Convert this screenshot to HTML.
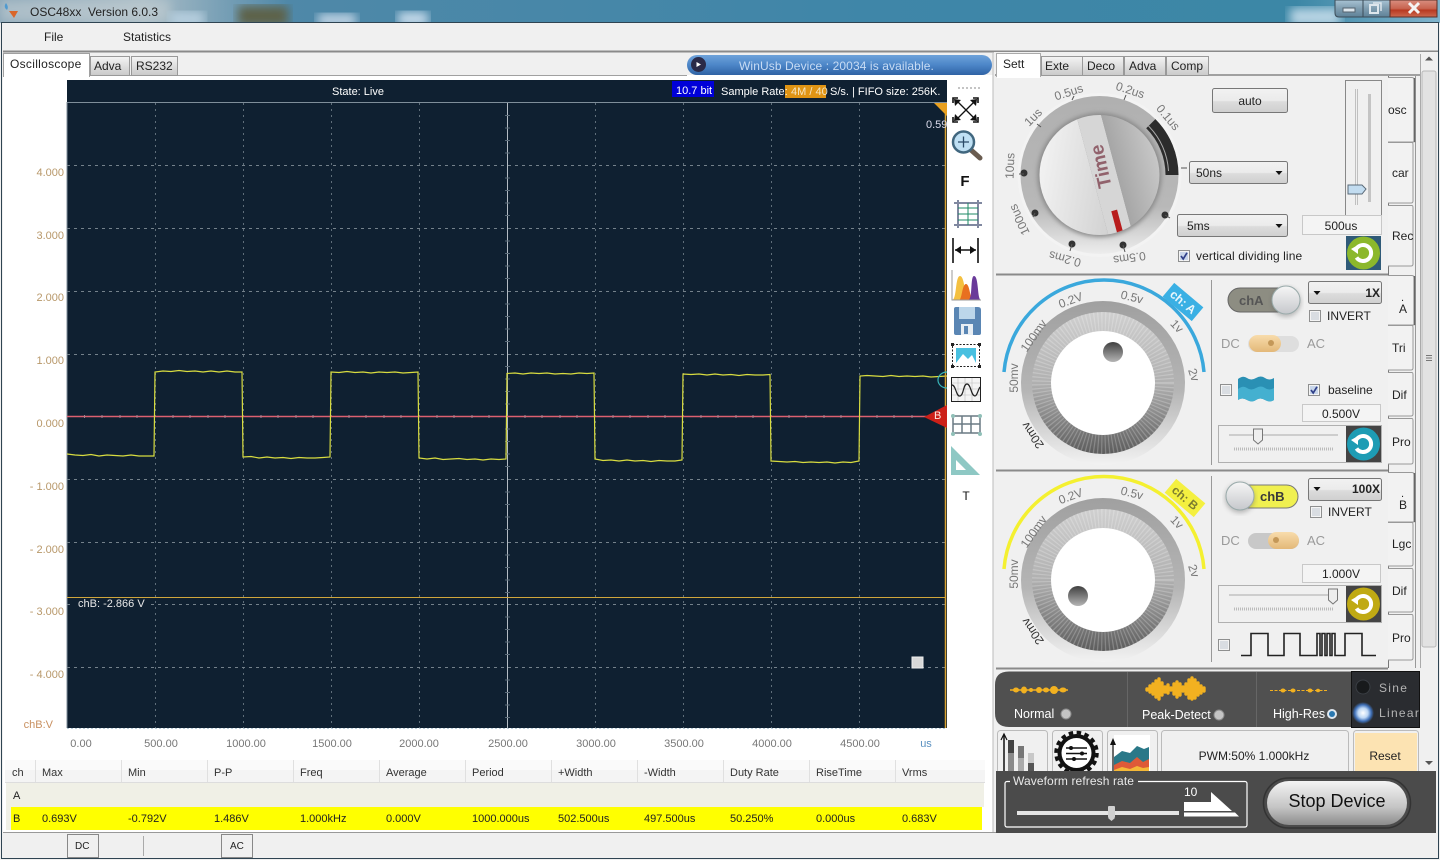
<!DOCTYPE html>
<html><head><meta charset="utf-8"><title>OSC48xx</title>
<style>
html,body{margin:0;padding:0;width:1440px;height:860px;overflow:hidden;background:#f0f0f0}
svg{display:block}
text{font-family:"Liberation Sans",sans-serif;font-size:12px;fill:#222}
.t11{font-size:11px}
.y{font-size:11px;fill:#b8986a;text-anchor:end}
.x{font-size:11px;fill:#777;text-anchor:middle}
.h{font-size:11px;fill:#333}
.v{font-size:11px;fill:#222}
.k{font-size:12px;fill:#777;text-anchor:middle}
.w{fill:#fff}
</style></head><body>
<svg width="1440" height="860" viewBox="0 0 1440 860" xmlns="http://www.w3.org/2000/svg">
<defs>
<linearGradient id="tb" x1="0" x2="1" y1="0" y2="0"><stop offset="0" stop-color="#8aa6b8"/><stop offset=".1" stop-color="#a9bcc6"/><stop offset=".2" stop-color="#4f88a8"/><stop offset=".6" stop-color="#3f86a8"/><stop offset=".9" stop-color="#3c87a6"/><stop offset="1" stop-color="#7fb3cc"/></linearGradient>
<linearGradient id="btn" x1="0" x2="0" y1="0" y2="1"><stop offset="0" stop-color="#f2f2f2"/><stop offset=".5" stop-color="#ebebeb"/><stop offset=".55" stop-color="#dcdcdc"/><stop offset="1" stop-color="#cfcfcf"/></linearGradient>
<linearGradient id="tab" x1="0" x2="0" y1="0" y2="1"><stop offset="0" stop-color="#f4f4f4"/><stop offset="1" stop-color="#c9c9c9"/></linearGradient>
<linearGradient id="pill" x1="0" x2="0" y1="0" y2="1"><stop offset="0" stop-color="#6ea2da"/><stop offset=".5" stop-color="#4c86c8"/><stop offset="1" stop-color="#2f62a4"/></linearGradient>
<linearGradient id="ko" x1="0" x2="0" y1="0" y2="1"><stop offset="0" stop-color="#a0a0a0"/><stop offset=".55" stop-color="#b5b5b5"/><stop offset="1" stop-color="#f2f2f2"/></linearGradient>
<linearGradient id="kr" x1="0" x2="0" y1="0" y2="1"><stop offset="0" stop-color="#d0d0d0"/><stop offset=".5" stop-color="#b0b0b0"/><stop offset="1" stop-color="#5c5c5c"/></linearGradient>
<linearGradient id="dot1" x1="0" x2="0" y1="0" y2="1"><stop offset="0" stop-color="#3f3f3f"/><stop offset="1" stop-color="#b5b5b5"/></linearGradient>
<linearGradient id="to" x1="0" x2="0" y1="0" y2="1"><stop offset="0" stop-color="#b0b0b0"/><stop offset=".7" stop-color="#b8b8b8"/><stop offset="1" stop-color="#ededed"/></linearGradient>
<linearGradient id="tl" x1="0" x2="1" y1="0" y2="1"><stop offset="0" stop-color="#fff"/><stop offset="1" stop-color="#d0d0d0"/></linearGradient>
<linearGradient id="tr" x1="0" x2="1" y1="0" y2="0"><stop offset="0" stop-color="#a6a6a6"/><stop offset="1" stop-color="#d4d4d4"/></linearGradient>
<linearGradient id="tog" x1="0" x2="0" y1="0" y2="1"><stop offset="0" stop-color="#f6f6f6"/><stop offset="1" stop-color="#c6c8cc"/></linearGradient>
<linearGradient id="org" x1="0" x2="0" y1="0" y2="1"><stop offset="0" stop-color="#f8dcac"/><stop offset="1" stop-color="#e3b878"/></linearGradient>
<linearGradient id="stop" x1="0" x2="0" y1="0" y2="1"><stop offset="0" stop-color="#f4f4f4"/><stop offset=".6" stop-color="#c4c4c4"/><stop offset="1" stop-color="#8c8c8c"/></linearGradient>
<radialGradient id="glow"><stop offset="0" stop-color="#fff"/><stop offset=".45" stop-color="#bcd6f4"/><stop offset=".75" stop-color="#3f70b8"/><stop offset="1" stop-color="#2a2c30"/></radialGradient>
<linearGradient id="cls" x1="0" x2="0" y1="0" y2="1"><stop offset="0" stop-color="#d98f80"/><stop offset=".5" stop-color="#c86450"/><stop offset=".6" stop-color="#b83a22"/><stop offset="1" stop-color="#cc6a50"/></linearGradient>
<linearGradient id="wb" x1="0" x2="0" y1="0" y2="1"><stop offset="0" stop-color="#a9c4d4"/><stop offset=".5" stop-color="#7f9db0"/><stop offset="1" stop-color="#5f8298"/></linearGradient>
<clipPath id="dial"><circle cx="0" cy="0" r="60"/></clipPath>
<clipPath id="plot"><rect x="67" y="80" width="880" height="648"/></clipPath>
<filter id="bl"><feGaussianBlur stdDeviation="5"/></filter>
<filter id="sh"><feGaussianBlur stdDeviation="2.5"/></filter>
<g id="knob">
<circle r="82" fill="url(#ko)"/>
<circle r="71" fill="url(#kr)"/>
<circle r="61.5" fill="none" stroke="#fff" stroke-opacity=".22" stroke-width="19" stroke-dasharray="1.2 2.4"/>
<circle r="52" fill="#fff"/>
</g>
<g id="cb"><rect x=".5" y=".5" width="11" height="11" fill="#f4f4f4" stroke="#8e8f8f"/><rect x="2" y="2" width="8" height="8" fill="#d9dde2"/></g>
<g id="cbc"><rect x=".5" y=".5" width="11" height="11" fill="#f4f4f4" stroke="#8e8f8f"/><rect x="2" y="2" width="8" height="8" fill="#c8d6ea"/><path d="M3 6 L5.2 9 L9 2.8" fill="none" stroke="#2f3f88" stroke-width="1.7"/></g>
<g id="ar"><path d="M-3.5 -2 H3.5 L0 2 Z" fill="#111"/></g>
<g id="rf"><path d="M10.5 12.5 A8 8 0 1 1 10.5 21.5" fill="none" stroke="#fff" stroke-width="4"/><path d="M5 13 L12 9 L12 18Z" fill="#fff"/></g>
<g id="thumb"><path d="M-4.5 -7 H4.5 V4 L0 8 L-4.5 4 Z" fill="#eee" stroke="#777"/></g>
</defs>

<!-- title bar -->
<rect width="1440" height="23" fill="url(#tb)"/>
<rect x="0" y="0" width="170" height="22" fill="#c6d0d4" opacity=".55" filter="url(#bl)"/>
<rect x="238" y="6" width="50" height="20" fill="#5d6248" filter="url(#bl)"/>
<rect x="170" y="12" width="34" height="14" fill="#b8d0e0" filter="url(#bl)"/>
<rect x="318" y="14" width="38" height="12" fill="#c6d8e8" filter="url(#bl)"/>
<rect x="398" y="12" width="30" height="14" fill="#c8dcec" filter="url(#bl)"/>
<rect x="1290" y="8" width="50" height="18" fill="#b8d4e4" filter="url(#bl)"/>
<path d="M9 11 L18 11 L14 18 Z" fill="#d9662a"/><path d="M7 10 Q3 7 6 3 Q9 7 7 10Z" fill="#4f9ad0"/>
<text x="30" y="16" style="font-size:12px" fill="#222">OSC48xx&#160;&#160;Version 6.0.3</text>
<path d="M1335 0 V13 Q1335 17 1339 17 H1390 V0Z" fill="url(#wb)" stroke="#3c4c58"/>
<rect x="1390" y="0" width="47" height="17" fill="url(#cls)" stroke="#5c3028"/>
<line x1="1363" y1="0" x2="1363" y2="17" stroke="#3c4c58"/>
<rect x="1343" y="8" width="12" height="4" fill="#dde6ec" stroke="#54636e"/>
<rect x="1370" y="5" width="8" height="8" fill="none" stroke="#dde6ec" stroke-width="2"/><path d="M1373 3 H1381 V11" fill="none" stroke="#dde6ec" stroke-width="1.5"/>
<path d="M1409 3 L1419 13 M1419 3 L1409 13" stroke="#f4f4f4" stroke-width="3"/>

<!-- window frame -->
<rect x="1.5" y="22.5" width="1437" height="836" fill="#f0f0f0" stroke="#2f4452"/>
<text x="44" y="41">File</text>
<text x="123" y="41">Statistics</text>
<line x1="3" y1="51.5" x2="1438" y2="51.5" stroke="#8a8a8a" stroke-width="2"/>

<!-- left pane -->
<rect x="3" y="75" width="990" height="757" fill="#fff"/>
<line x1="89" y1="75.5" x2="687" y2="75.5" stroke="#a0a0a0"/>
<rect x="3.5" y="53.5" width="86" height="23" fill="#fff" stroke="#a0a0a0"/><rect x="4" y="70" width="85" height="8" fill="#fff"/>
<text x="10" y="68" style="letter-spacing:.3px">Oscilloscope</text>
<rect x="90.5" y="56.5" width="39" height="19" fill="url(#tab)" stroke="#999"/><text x="94" y="70">Adva</text>
<rect x="131.5" y="56.5" width="46" height="19" fill="url(#tab)" stroke="#999"/><text x="136" y="70">RS232</text>
<line x1="993" y1="52" x2="993" y2="832" stroke="#bbb"/>
<rect x="994" y="52" width="426" height="780" fill="#f0f0f0"/>

<rect x="687" y="55" width="305" height="20" rx="10" fill="url(#pill)"/>
<circle cx="698.5" cy="64.5" r="7.5" fill="#2a2a48"/><path d="M696.5 62 L701 64.5 L696.5 67Z" fill="#fff"/>
<text x="739" y="70" style="fill:#c8dcf4;letter-spacing:.1px">WinUsb Device : 20034 is available.</text>

<!-- plot -->
<rect x="67" y="80" width="880" height="648" fill="#0f2031"/>
<line x1="67" y1="102.5" x2="947" y2="102.5" stroke="#7f8e9a"/>
<line x1="67" y1="102" x2="67" y2="728" stroke="#7f8e9a"/>
<g stroke="#5f6e7a" stroke-width="1" stroke-dasharray="2 4">
<path d="M155.5 103V728M243.5 103V728M331.5 103V728M419.5 103V728M595.5 103V728M683.5 103V728M771.5 103V728M859.5 103V728"/>
</g>
<g stroke="#74818b" stroke-width="1" stroke-dasharray="3 4">
<path d="M67 165.5H945M67 228.5H945M67 291.5H945M67 354.5H945M67 479.5H945M67 542.5H945M67 604.5H945M67 667.5H945"/>
</g>
<line x1="507.5" y1="103" x2="507.5" y2="728" stroke="#b4bcc4"/>
<path d="M505 115.5h5M505 128h5M505 140.5h5M505 153h5M505 178h5M505 190.5h5M505 203h5M505 215.5h5M505 241h5M505 253.5h5M505 266h5M505 278.5h5M505 304h5M505 316.5h5M505 329h5M505 341.5h5M505 366.5h5M505 379h5M505 391.5h5M505 404h5M505 429h5M505 441.5h5M505 454h5M505 466.5h5M505 492h5M505 504.5h5M505 517h5M505 529.5h5M505 555h5M505 567.5h5M505 580h5M505 592.5h5M505 617h5M505 629.5h5M505 642h5M505 654.5h5M505 680h5M505 692.5h5M505 705h5M505 717.5h5" stroke="#5a6a78"/>
<line x1="67" y1="416.5" x2="928" y2="416.5" stroke="#dc6070" stroke-width="1.5"/>
<path d="M84.500 415v3M102 415v3M120 415v3M137 415v3M173 415v3M190 415v3M208 415v3M225 415v3M261 415v3M278 415v3M296 415v3M313 415v3M349 415v3M366 415v3M384 415v3M401 415v3M437 415v3M454 415v3M472 415v3M489 415v3M525 415v3M542 415v3M560 415v3M577 415v3M613 415v3M630 415v3M648 415v3M665 415v3M701 415v3M718 415v3M736 415v3M753 415v3M789 415v3M806 415v3M824 415v3M841 415v3M877 415v3M894 415v3M912 415v3" stroke="#a08490"/>
<line x1="67" y1="597.5" x2="945" y2="597.5" stroke="#d0a63c"/>
<rect x="70" y="598" width="80" height="12" fill="#0f2031"/>
<g clip-path="url(#plot)">
<polyline fill="none" stroke="#d8dc40" stroke-width="1.2" points="67,454 75,455 83,455.500 91,454.500 99,456 107,455 115,455.500 123,456 131,455 139,456 147,456 154,456 155,372 163,371 171,371.500 179,370.500 187,371.500 195,371 203,372 211,371 219,372 227,371 235,372 242,372 243,457 251,456.500 259,458 267,457 275,458 283,457.500 291,458.500 299,457.500 307,458 315,458 323,457.500 330,457 331,372 339,372.500 347,371.500 355,372.500 363,372 371,373 379,372 387,372.500 395,372 403,373 411,372.500 418,372 419,458 427,459 435,458 443,459.500 451,459 459,458.500 467,459.500 475,459 483,460 491,459 499,459.500 506,459 507,373.500 515,373 523,374 531,373 539,373.500 547,373 555,374 563,373.500 571,374 579,373 587,373.500 594,373 595,459 603,460.500 611,460 619,461 627,460 635,461 643,460.500 651,461.500 659,460.500 667,461 675,461 682,460 683,374 691,374.500 699,374 707,375 715,374 723,375 731,374.500 739,375.500 747,374.500 755,375 763,375 770,374.500 771,461 779,461.500 787,462 795,461.500 803,462.500 811,462 819,462.500 827,462 835,463 843,462 851,462.500 859,461 860,376 867,375.500 875,376 883,376.500 891,375.500 899,376.500 907,376 915,376.500 923,376 931,377 939,376.500 947,376"/>
</g>
<text x="332" y="95" class="t11 w">State: Live</text>
<rect x="672" y="81" width="42" height="16" fill="#0000d8"/>
<text x="676" y="94" class="t11 w">10.7 bit</text>
<rect x="785" y="85" width="41" height="13" fill="#e09414"/>
<text x="721" y="95" class="t11 w">Sample Rate:</text>
<text x="791" y="95" class="t11" style="fill:#f4e4c0">4M / 40</text>
<text x="830" y="95" class="t11 w">S/s. | FIFO size: 256K.</text>
<text x="78" y="607" class="t11" style="fill:#e8e8e8">chB: -2.866 V</text>
<rect x="912" y="657" width="11" height="11" fill="#d8d8d8" stroke="#eee"/>
<line x1="945.500" y1="103" x2="945.500" y2="728" stroke="#d8a030" stroke-width="1.5"/>
<path d="M934 103 H947 V116 Z" fill="#e8a020"/>
<svg x="67" y="80" width="880" height="648" viewBox="67 80 880 648"><text x="926" y="128" class="t11" style="fill:#dde">0.59</text></svg>
<path d="M947 405 V428 L924 417 Z" fill="#cc2018"/>
<text x="934" y="419" class="t11" style="fill:#ffe8e0">B</text>
<path d="M947 372 A9 8 0 0 0 947 388" fill="none" stroke="#38b4b8" stroke-width="1.2"/>
<line x1="67" y1="728.500" x2="947" y2="728.500" stroke="#b8ccd8" stroke-dasharray="2 2"/>

<text class="y" x="64" y="176">4.000</text><text class="y" x="64" y="239">3.000</text><text class="y" x="64" y="301">2.000</text><text class="y" x="64" y="364">1.000</text><text class="y" x="64" y="427">0.000</text><text class="y" x="64" y="490">- 1.000</text><text class="y" x="64" y="553">- 2.000</text><text class="y" x="64" y="615">- 3.000</text><text class="y" x="64" y="678">- 4.000</text>
<text class="y" x="53" y="728" style="fill:#c89060">chB:V</text>
<text class="x" x="81" y="747">0.00</text><text class="x" x="161" y="747">500.00</text><text class="x" x="246" y="747">1000.00</text><text class="x" x="332" y="747">1500.00</text><text class="x" x="419" y="747">2000.00</text><text class="x" x="508" y="747">2500.00</text><text class="x" x="596" y="747">3000.00</text><text class="x" x="684" y="747">3500.00</text><text class="x" x="772" y="747">4000.00</text><text class="x" x="860" y="747">4500.00</text>
<text class="x" x="926" y="747" style="fill:#5a90c0">us</text>

<!-- toolbar -->
<line x1="958" y1="88" x2="980" y2="88" stroke="#888" stroke-dasharray="2 2"/>
<g stroke="#111" fill="none" stroke-width="1.6"><path d="M953 103V98H958M973 98H978V103M953 117V122H958M973 122H978V117"/><path d="M956 100L976 120M976 100L956 120" stroke-width="1.3"/></g>
<g fill="#111"><path d="M954 99L961 100L955 106ZM977 99L970 100L976 106ZM954 121L961 120L955 114ZM977 121L970 120L976 114Z"/></g>
<path d="M971 150L980 158" stroke="#6a5c50" stroke-width="5" stroke-linecap="round"/>
<circle cx="963.500" cy="142" r="10.500" fill="#bfe0f4" stroke="#41677f" stroke-width="2.500"/><path d="M958 142h11M963.500 136.500v11" stroke="#2a4a68" stroke-width="1.3"/>
<text x="965" y="186" text-anchor="middle" style="font-size:15px;font-weight:bold;fill:#111">F</text>
<g stroke="#8088a0" stroke-width="2"><path d="M954 203H982M954 225H982M958 200V228M978 200V228"/></g>
<path d="M958 214H978M968 203V225M958 208H978M958 220H978" stroke="#1c8a64" stroke-width="1"/>
<path d="M953 238V263M978 238V263" stroke="#111" stroke-width="1.6"/><path d="M955 250H976" stroke="#111" stroke-width="1.5"/><path d="M955 250L961 246V254ZM976 250L970 246V254Z" fill="#111"/>
<path d="M952 300C957 300 955 276 960 276C965 276 965 300 968 300Z" fill="#f4c040"/><path d="M959 300C962 300 962 284 966 284C970 284 970 300 973 300Z" fill="#e87020"/><path d="M968 300C973 300 970 276 974 276C979 276 977 300 981 300Z" fill="#6a3a9a"/><path d="M952 270V300H981" fill="none" stroke="#999"/>
<path d="M954 309Q954 307 956 307H978Q981 307 981 310V333Q981 335 979 335H956Q954 335 954 333Z" fill="#5a86b4"/><rect x="959" y="307" width="16" height="12" fill="#bcd6ea"/><rect x="961" y="324" width="12" height="11" fill="#e8eef4"/><rect x="964" y="326" width="4" height="8" fill="#5a86b4"/>
<rect x="952.500" y="344.500" width="27" height="22" fill="#fff" stroke="#222" stroke-dasharray="2 1.500"/><rect x="956" y="348" width="20" height="15" fill="#48c0e0"/><path d="M956 363L963 354L968 359L972 355L976 363Z" fill="#fff"/><rect x="951" y="343" width="3" height="3" fill="#222"/><rect x="978" y="343" width="3" height="3" fill="#222"/><rect x="951" y="365" width="3" height="3" fill="#222"/><rect x="978" y="365" width="3" height="3" fill="#222"/>
<rect x="951.500" y="377.500" width="29" height="24" fill="#f4f4f4" stroke="#222"/><path d="M952 383H980M952 389H980M952 395H980M958 378V401M965 378V401M972 378V401" stroke="#bbb" stroke-width=".6"/><path d="M952 385C956 385 956 397 960 396C964 395 963 384 967 384C971 384 971 396 975 396C977 396 978 390 980 387" fill="none" stroke="#222" stroke-width="1.2"/>
<g stroke="#6a7a84" stroke-width="1.500"><path d="M953 416H980M953 424H980M953 433H980M953 416V433M962 416V433M971 416V433M980 416V433"/></g><g fill="#90c0b8"><circle cx="953" cy="416" r="2"/><circle cx="980" cy="416" r="2"/><circle cx="953" cy="434" r="2"/><circle cx="980" cy="434" r="2"/></g>
<path d="M951 446V475H980ZM956 460L956 470H966Z" fill="#8ec8c4" fill-rule="evenodd"/>
<text x="966" y="500" text-anchor="middle" style="font-size:12px;fill:#111">T</text>

<!-- table -->
<rect x="5" y="760" width="980" height="23" fill="#fafafa"/>
<rect x="5" y="770" width="980" height="13" fill="#f4f4f4"/>
<line x1="5" y1="782.500" x2="985" y2="782.500" stroke="#ddd"/>
<path d="M35.500 760V782M121.500 760V782M207.500 760V782M293.500 760V782M379.500 760V782M465.500 760V782M551.500 760V782M637.500 760V782M723.500 760V782M809.500 760V782M895.500 760V782" stroke="#e0e0e0"/>
<text class="h" x="12" y="776">ch</text><text class="h" x="42" y="776">Max</text><text class="h" x="128" y="776">Min</text><text class="h" x="214" y="776">P-P</text><text class="h" x="300" y="776">Freq</text><text class="h" x="386" y="776">Average</text><text class="h" x="472" y="776">Period</text><text class="h" x="558" y="776">+Width</text><text class="h" x="644" y="776">-Width</text><text class="h" x="730" y="776">Duty Rate</text><text class="h" x="816" y="776">RiseTime</text><text class="h" x="902" y="776">Vrms</text>
<rect x="6" y="783" width="978" height="24" fill="#f0f0e6"/>
<rect x="11" y="807" width="971" height="23" fill="#ffff00"/>
<rect x="6" y="807" width="5" height="23" fill="#f0f0e6"/>
<text class="v" x="13" y="799">A</text>
<text class="v" x="13" y="822">B</text><text class="v" x="42" y="822">0.693V</text><text class="v" x="128" y="822">-0.792V</text><text class="v" x="214" y="822">1.486V</text><text class="v" x="300" y="822">1.000kHz</text><text class="v" x="386" y="822">0.000V</text><text class="v" x="472" y="822">1000.000us</text><text class="v" x="558" y="822">502.500us</text><text class="v" x="644" y="822">497.500us</text><text class="v" x="730" y="822">50.250%</text><text class="v" x="816" y="822">0.000us</text><text class="v" x="902" y="822">0.683V</text>

<!-- bottom bar -->
<rect x="3" y="832" width="1435" height="26" fill="#f0f0f0"/>
<line x1="3" y1="832.500" x2="996" y2="832.500" stroke="#999"/>
<rect x="67.500" y="834.500" width="31" height="23" fill="#f0f0f0" stroke="#888"/><text x="75" y="849" style="font-size:10px">DC</text>
<line x1="143.500" y1="836" x2="143.500" y2="856" stroke="#aaa"/>
<rect x="221.500" y="834.500" width="31" height="23" fill="#f0f0f0" stroke="#888"/><text x="230" y="849" style="font-size:10px">AC</text>

<!-- right tabs -->
<rect x="995" y="74" width="425" height="2" fill="#a0a0a0"/>
<rect x="996.500" y="53.500" width="44" height="23" fill="#fff" stroke="#aaa"/><rect x="997" y="70" width="43" height="8" fill="#fff"/>
<text x="1003" y="68">Sett</text>
<rect x="1041.500" y="56.500" width="41" height="19" fill="url(#tab)" stroke="#999"/><text x="1045" y="70">Exte</text>
<rect x="1082.500" y="56.500" width="41" height="19" fill="url(#tab)" stroke="#999"/><text x="1087" y="70">Deco</text>
<rect x="1124.500" y="56.500" width="41" height="19" fill="url(#tab)" stroke="#999"/><text x="1129" y="70">Adva</text>
<rect x="1166.500" y="56.500" width="42" height="19" fill="url(#tab)" stroke="#999"/><text x="1171" y="70">Comp</text>

<!-- panel separators -->
<path d="M996 274.500H1388M996 470.500H1388M996 668.500H1388" stroke="#8a8a8a" stroke-width="2"/>
<line x1="1388.500" y1="76" x2="1388.500" y2="668" stroke="#777"/>
<line x1="1415.500" y1="76" x2="1415.500" y2="668" stroke="#999"/>

<!-- vertical tabs -->
<g fill="#f2f2f2" stroke="#999">
<path d="M1388 77.500H1412Q1414 77.500 1414 80V142H1388"/><path d="M1388 142.500H1412Q1413 142.500 1413 145V201Q1413 203 1411 203H1388"/><path d="M1388 205.500H1412Q1413 205.500 1413 208V264Q1413 266 1411 266H1388"/>
<path d="M1388 275.500H1412Q1414 275.500 1414 278V325H1388"/><path d="M1388 325.500H1412Q1413 325.500 1413 328V368Q1413 370 1411 370H1388"/><path d="M1388 372.500H1412Q1413 372.500 1413 375V414Q1413 416 1411 416H1388"/><path d="M1388 418.500H1412Q1413 418.500 1413 421V462Q1413 464 1411 464H1388"/>
<path d="M1388 472.500H1412Q1414 472.500 1414 475V522H1388"/><path d="M1388 522.500H1412Q1413 522.500 1413 525V564Q1413 566 1411 566H1388"/><path d="M1388 568.500H1412Q1413 568.500 1413 571V610Q1413 612 1411 612H1388"/><path d="M1388 614.500H1412Q1413 614.500 1413 617V658Q1413 660 1411 660H1388"/>
</g>
<line x1="1414.500" y1="78" x2="1414.500" y2="142" stroke="#666" stroke-width="1.500"/>
<line x1="1414.500" y1="276" x2="1414.500" y2="325" stroke="#666" stroke-width="1.500"/>
<line x1="1414.500" y1="473" x2="1414.500" y2="522" stroke="#666" stroke-width="1.500"/>
<svg x="1388" y="77" width="25" height="590" viewBox="1388 77 25 590">
<text x="1388" y="114">osc</text><text x="1392" y="177">car</text><text x="1392" y="240">Rec</text>
<text x="1399" y="313">A</text><text x="1392" y="352">Tri</text><text x="1392" y="399">Dif</text><text x="1392" y="446">Pro</text>
<text x="1399" y="509">B</text><text x="1392" y="548">Lgc</text><text x="1392" y="595">Dif</text><text x="1392" y="642">Pro</text>
</svg>
<text x="1401" y="301" class="t11">.</text><text x="1401" y="497" class="t11">.</text>

<!-- scrollbar -->
<rect x="1420" y="52" width="18" height="718" fill="#f0f0f0"/>
<line x1="1420.500" y1="54" x2="1420.500" y2="668" stroke="#aaa"/>
<rect x="1422" y="71" width="14" height="576" rx="2" fill="#e2e2e2" stroke="#b8b8b8"/>
<path d="M1425 60.500H1433L1429 56.500Z" fill="#555"/>
<path d="M1425 761H1433L1429 765Z" fill="#555"/>
<path d="M1426 355.500h6M1426 358h6M1426 360.500h6" stroke="#777"/>

<!-- Time knob -->
<g transform="translate(1099.500 175)">
<circle r="82" fill="#f4f4f4" opacity=".8"/>
<circle r="79" fill="url(#to)"/>
<path d="M51.300 -51.300 A72.500 72.500 0 0 1 72.500 0" fill="none" stroke="#2c2c2c" stroke-width="13"/>
<path d="M49 -49 A69 69 0 0 1 69 -4" fill="none" stroke="#aaa" stroke-width="1"/>
<circle r="62" fill="#888" filter="url(#sh)"/>
<g clip-path="url(#dial)"><g transform="rotate(-15)">
<rect x="-70" y="-70" width="63" height="140" fill="url(#tl)"/>
<rect x="-7" y="-70" width="24" height="140" fill="#d6d6d6"/>
<rect x="17" y="-70" width="60" height="140" fill="url(#tr)"/>
<rect x="2" y="38" width="6" height="24" fill="#b81c1c"/>
</g></g>
</g>
<text transform="translate(1107 165) rotate(-102)" text-anchor="middle" style="font-size:19px;font-weight:bold;fill:#91626c">Time</text>
<g fill="#333"><circle cx="1024" cy="173" r="3.500"/><circle cx="1035" cy="213" r="3.500"/><circle cx="1072" cy="244" r="3.500"/><circle cx="1123" cy="245" r="3.500"/><circle cx="1165" cy="215" r="3.500"/></g>
<path d="M1019 174h5M1033 217l2 -4M1070 251l2 -7M1125 252l-2 -7M1170 218l-5 -3M1037 124l4 3M1072 100l2 -4M1124 100l2 -5M1181 168h6" stroke="#555"/>
<text class="k" transform="translate(1014 166) rotate(-88)">10us</text>
<text class="k" transform="translate(1023 218) rotate(-115)">100us</text>
<text class="k" transform="translate(1066 255) rotate(-165)">0.2ms</text>
<text class="k" transform="translate(1129 254) rotate(172)">0.5ms</text>
<text class="k" transform="translate(1036 120) rotate(-45)">1us</text>
<text class="k" transform="translate(1070 96) rotate(-18)">0.5us</text>
<text class="k" transform="translate(1129 94) rotate(18)">0.2us</text>
<text class="k" transform="translate(1165 120) rotate(50)">0.1us</text>

<rect x="1212.500" y="88.500" width="75" height="24" rx="2" fill="url(#btn)" stroke="#777"/><text x="1250" y="105" text-anchor="middle">auto</text>
<rect x="1189.500" y="161.500" width="98" height="22" rx="2" fill="url(#btn)" stroke="#777"/><text x="1196" y="177">50ns</text><use href="#ar" x="1279" y="173"/>
<rect x="1177.500" y="214.500" width="110" height="22" rx="2" fill="url(#btn)" stroke="#777"/><text x="1187" y="230">5ms</text><use href="#ar" x="1279" y="226"/>
<use href="#cbc" x="1178" y="250"/><text x="1196" y="260" style="letter-spacing:.1px">vertical dividing line</text>
<rect x="1345.500" y="80.500" width="36" height="135" fill="#f0f0f0" stroke="#888"/>
<path d="M1355.500 89V205M1357.500 89V205" stroke="#c0c0c0"/><rect x="1368" y="94" width="3" height="108" fill="#c4c4c4"/>
<path d="M1348 185H1362L1366 189L1362 194H1348Z" fill="#c2dcf0" stroke="#5a6a78"/>
<rect x="1302.500" y="215.500" width="79" height="19" fill="#f4f4f4" stroke="#c8c8c8"/><text x="1341" y="230" text-anchor="middle">500us</text>
<rect x="1346" y="236" width="35" height="34" fill="#2f5a78"/><circle cx="1363.500" cy="253" r="16.500" fill="#8cb82c"/>
<use href="#rf" x="1346" y="236"/>

<!-- Ch A -->
<use href="#knob" x="1103" y="383"/>
<circle cx="1113" cy="352" r="10" fill="url(#dot1)"/>
<path d="M1004 372 A100.350 100.350 0 0 1 1204 372" fill="none" stroke="#3aa8dc" stroke-width="3.500"/>
<g transform="translate(1183 302) rotate(40)"><rect x="-19" y="-9" width="38" height="18" fill="#3ab0e4"/><text text-anchor="middle" y="4" style="fill:#e8f6fc;font-size:12px;font-weight:bold">ch: A</text></g>
<text class="k" transform="translate(1018 378) rotate(-90)">50mv</text>
<text class="k" transform="translate(1037 338) rotate(-55)">100mv</text>
<text class="k" transform="translate(1072 304) rotate(-20)">0.2V</text>
<text class="k" transform="translate(1131 301) rotate(14)">0.5v</text>
<text class="k" transform="translate(1174 329) rotate(46)">1v</text>
<text class="k" transform="translate(1190 376) rotate(72)">2v</text>
<text class="k" transform="translate(1036 433) rotate(-125)" style="fill:#333">20mv</text>
<line x1="1211.500" y1="280" x2="1211.500" y2="465" stroke="#999"/>
<rect x="1228" y="288" width="70" height="24" rx="12" fill="#8d8d82" stroke="#666"/><text x="1239" y="305" style="font-weight:bold;font-size:13px;fill:#555">chA</text>
<circle cx="1286" cy="302" r="15" fill="#666" opacity=".4" filter="url(#sh)"/><circle cx="1286" cy="300" r="14" fill="url(#tog)" stroke="#9aa"/>
<rect x="1308.500" y="281.500" width="73" height="22" rx="2" fill="url(#btn)" stroke="#777"/><use href="#ar" x="1317" y="293"/><text x="1380" y="297" text-anchor="end" style="font-weight:bold">1X</text>
<use href="#cb" x="1309" y="310"/><text x="1327" y="320">INVERT</text>
<text x="1221" y="348" style="fill:#9a9a9a;font-size:13px">DC</text><text x="1307" y="348" style="fill:#9a9a9a;font-size:13px">AC</text>
<rect x="1248" y="336" width="51" height="16" rx="8" fill="#dedede"/><rect x="1249" y="335" width="32" height="17" rx="8.500" fill="url(#org)"/><circle cx="1271" cy="343" r="3" fill="#c49858"/>
<use href="#cb" x="1220" y="384"/>
<path d="M1238 379Q1243 375 1247 378T1256 378T1265 378T1274 378V400Q1270 403 1265 400T1256 400T1247 400T1238 400Z" fill="#2a90b4"/><path d="M1238 389Q1243 385 1247 388T1256 388T1265 388T1274 388V400Q1270 403 1265 400T1256 400T1247 400T1238 400Z" fill="#44b0d0"/>
<use href="#cbc" x="1308" y="384"/><text x="1328" y="394">baseline</text>
<rect x="1302.500" y="404.500" width="78" height="17" fill="#f4f4f4" stroke="#c8c8c8"/><text x="1341" y="418" text-anchor="middle">0.500V</text>
<rect x="1218.500" y="425.500" width="163" height="37" fill="#f0f0f0" stroke="#b0b0b0"/>
<line x1="1229" y1="435" x2="1338" y2="435" stroke="#aaa"/><line x1="1234" y1="449" x2="1334" y2="449" stroke="#bbb" stroke-width="3" stroke-dasharray="1 1"/>
<use href="#thumb" x="1258" y="436"/>
<rect x="1346" y="426" width="35" height="36" fill="#444"/><circle cx="1363.500" cy="444" r="16.500" fill="#1e9cb4"/>
<use href="#rf" x="1346" y="427"/>

<!-- Ch B -->
<use href="#knob" x="1103" y="580"/>
<circle cx="1078" cy="596" r="10" fill="url(#dot1)"/>
<path d="M1004 569 A100.300 100.300 0 0 1 1204 569" fill="none" stroke="#f4f030" stroke-width="3.500"/>
<g transform="translate(1185 498) rotate(40)"><rect x="-19" y="-9" width="38" height="18" fill="#f4f040"/><text text-anchor="middle" y="4" style="fill:#7c7c30;font-size:12px;font-weight:bold">ch: B</text></g>
<text class="k" transform="translate(1018 574) rotate(-90)">50mv</text>
<text class="k" transform="translate(1037 534) rotate(-55)">100mv</text>
<text class="k" transform="translate(1072 500) rotate(-20)">0.2V</text>
<text class="k" transform="translate(1131 497) rotate(14)">0.5v</text>
<text class="k" transform="translate(1174 525) rotate(46)">1v</text>
<text class="k" transform="translate(1190 572) rotate(72)">2v</text>
<text class="k" transform="translate(1036 629) rotate(-125)" style="fill:#333">20mv</text>
<line x1="1211.500" y1="476" x2="1211.500" y2="662" stroke="#999"/>
<rect x="1228" y="485" width="70" height="23" rx="11.500" fill="#f0f050" stroke="#777"/><text x="1260" y="501" style="font-weight:bold;font-size:13px;fill:#3a3a3a">chB</text>
<circle cx="1240" cy="498" r="15" fill="#666" opacity=".4" filter="url(#sh)"/><circle cx="1240" cy="496" r="14" fill="url(#tog)" stroke="#9aa"/>
<rect x="1308.500" y="478.500" width="73" height="22" rx="2" fill="url(#btn)" stroke="#777"/><use href="#ar" x="1317" y="489"/><text x="1380" y="493" text-anchor="end" style="font-weight:bold">100X</text>
<use href="#cb" x="1310" y="506"/><text x="1328" y="516">INVERT</text>
<text x="1221" y="545" style="fill:#9a9a9a;font-size:13px">DC</text><text x="1307" y="545" style="fill:#9a9a9a;font-size:13px">AC</text>
<rect x="1248" y="533" width="51" height="16" rx="8" fill="#c8c8c8"/><rect x="1268" y="532" width="31" height="17" rx="8.500" fill="url(#org)"/><circle cx="1276" cy="540" r="3" fill="#c49858"/>
<rect x="1302.500" y="564.500" width="78" height="18" fill="#f4f4f4" stroke="#c8c8c8"/><text x="1341" y="578" text-anchor="middle">1.000V</text>
<rect x="1218.500" y="585.500" width="163" height="37" fill="#f0f0f0" stroke="#b0b0b0"/>
<line x1="1229" y1="595" x2="1333" y2="595" stroke="#aaa"/><line x1="1234" y1="609" x2="1334" y2="609" stroke="#bbb" stroke-width="3" stroke-dasharray="1 1"/>
<use href="#thumb" x="1333" y="596"/>
<rect x="1346" y="586" width="35" height="36" fill="#444"/><circle cx="1363.500" cy="604" r="16.500" fill="#c0aa14"/>
<use href="#rf" x="1346" y="587"/>
<use href="#cb" x="1218" y="639"/>
<path d="M1241 655.500H1251V633.500H1268V655.500H1284V633.500H1300V655.500H1317V633.500H1320V655.500H1322V633.500H1325V655.500H1327V633.500H1330V655.500H1332V633.500H1335V655.500H1345V633.500H1362V655.500H1376" fill="none" stroke="#222" stroke-width="1.600"/>

<!-- dark mode panel -->
<path d="M1009 671.500H1351V727H1009Q995 727 995 713V685Q995 671.500 1009 671.500Z" fill="#505050"/>
<line x1="1127.500" y1="672" x2="1127.500" y2="727" stroke="#666"/><line x1="1256.500" y1="672" x2="1256.500" y2="727" stroke="#666"/>
<rect x="1351.500" y="671.500" width="68" height="56" fill="#2a2c30" stroke="#111"/>
<path d="M1010 690H1068" stroke="#f2b120" stroke-width="1.500"/>
<g fill="#f2b120"><ellipse cx="1016" cy="690" rx="3" ry="2.500"/><ellipse cx="1024" cy="690" rx="3" ry="3.500"/><ellipse cx="1031" cy="690" rx="2" ry="2"/><ellipse cx="1039" cy="690" rx="3" ry="3"/><ellipse cx="1046" cy="690" rx="3" ry="2.500"/><ellipse cx="1054" cy="690" rx="4" ry="4"/><ellipse cx="1063" cy="690" rx="3.500" ry="2.500"/></g>
<g stroke="#f2b120" stroke-width="3.400" stroke-linecap="round"><path d="M1147 689v1M1150 686v6M1153 684v10M1156 681v16M1159 679v20M1162 683v12M1165 687v5M1168 685v8M1171 688v2M1174 684v10M1177 682v15M1180 684v11M1183 687v4M1186 684v10M1189 680v18M1192 678v21M1195 680v18M1198 683v12M1201 686v7M1204 688v3"/></g>
<path d="M1270 690.500H1328" stroke="#f2b120" stroke-width="1" stroke-dasharray="3 1.500"/>
<g fill="#f2b120"><ellipse cx="1283" cy="690.500" rx="2.500" ry="2"/><ellipse cx="1293" cy="690.500" rx="2.500" ry="2"/><ellipse cx="1310" cy="690.500" rx="2.500" ry="2"/><ellipse cx="1318" cy="690.500" rx="2" ry="1.800"/></g>
<text x="1014" y="718" class="w" style="font-size:12.500px">Normal</text>
<text x="1142" y="719" class="w" style="font-size:12.500px">Peak-Detect</text>
<text x="1273" y="718" class="w" style="font-size:12.500px">High-Res</text>
<circle cx="1066" cy="714" r="5" fill="#c4c4c4" stroke="#8a8a8a"/><circle cx="1219" cy="715" r="5" fill="#c4c4c4" stroke="#8a8a8a"/>
<circle cx="1332" cy="714" r="5" fill="#e0e8f0"/><circle cx="1332" cy="714" r="3" fill="#2a78b0"/>
<circle cx="1363" cy="687" r="7" fill="#181a1c" stroke="#3a3e44"/>
<circle cx="1363" cy="713" r="11" fill="url(#glow)"/>
<text x="1379" y="692" style="fill:#b4b4b4;letter-spacing:1.300px">Sine</text>
<text x="1379" y="717" style="fill:#b4b4b4;letter-spacing:1.300px">Linear</text>

<!-- button row -->
<g fill="#f0f0f0" stroke="#bbb">
<rect x="997.500" y="730.500" width="50" height="44" rx="3"/><rect x="1052.500" y="730.500" width="50" height="44" rx="3"/><rect x="1107.500" y="730.500" width="50" height="44" rx="3"/><rect x="1161.500" y="730.500" width="187" height="44" rx="3"/><rect x="1353.500" y="730.500" width="65" height="44" rx="3" />
</g>
<rect x="1355" y="733" width="62" height="40" fill="#fce3b2"/>
<text x="1254" y="760" text-anchor="middle">PWM:50% 1.000kHz</text>
<text x="1385" y="760" text-anchor="middle">Reset</text>
<path d="M1004 735V775" stroke="#111" stroke-width="1.500"/><path d="M1001 740L1004 734L1007 740" fill="none" stroke="#111" stroke-width="1.200"/>
<rect x="1008" y="740" width="6" height="13" fill="#444"/><rect x="1008" y="753" width="6" height="20" fill="#8a8a8a"/>
<rect x="1018" y="746" width="6" height="12" fill="#777"/><rect x="1018" y="758" width="6" height="15" fill="#aaa"/>
<rect x="1028" y="753" width="6" height="10" fill="#c8c8c8"/><rect x="1028" y="763" width="6" height="10" fill="#555"/>
<circle cx="1076.500" cy="753" r="19" fill="#111"/><circle cx="1076.500" cy="753" r="20.500" fill="none" stroke="#111" stroke-width="3.500" stroke-dasharray="4.500 3.550"/>
<circle cx="1076.500" cy="753" r="15" fill="#fff"/>
<path d="M1066 748H1087M1066 753.500H1087M1066 759H1087" stroke="#111" stroke-width="1.500"/><circle cx="1071" cy="748" r="2" fill="#111"/><circle cx="1082" cy="753.500" r="2" fill="#111"/><circle cx="1074" cy="759" r="2" fill="#111"/>
<rect x="1114" y="735" width="36" height="38" fill="#fff"/>
<path d="M1113 740V775" stroke="#111" stroke-width="1.200"/><path d="M1110 745L1113 738L1116 745Z" fill="#111"/>
<path d="M1114 757L1122 751L1130 753L1137 746L1144 749L1149 747V775H1114Z" fill="#2a7888"/>
<path d="M1114 765L1122 761L1130 763L1137 757L1143 762L1149 759V775H1114Z" fill="#de5a38"/>
<path d="M1114 770L1122 767L1130 769L1137 766L1143 768L1149 767V775H1114Z" fill="#f4b838"/>

<!-- stop panel -->
<rect x="996" y="771" width="440" height="62" fill="#4b4b4b"/>
<rect x="1005" y="781.500" width="242" height="45.500" rx="2" fill="none" stroke="#fff" stroke-width="1.200"/>
<rect x="1010" y="774" width="128" height="14" fill="#4b4b4b"/>
<text x="1013" y="785" style="fill:#e8e8e8;letter-spacing:.1px">Waveform refresh rate</text>
<rect x="1017" y="811" width="162" height="4" fill="#e4e4e4"/>
<rect x="1108" y="806" width="7" height="12" rx="1" fill="#d0d0d0"/><path d="M1108 818L1111.500 821L1115 818Z" fill="#d0d0d0"/>
<text x="1184" y="796" class="w">10</text>
<path d="M1184 802H1211V792L1232 811H1184Z" fill="#fff"/><path d="M1184 812.500H1235L1239 816.500H1184Z" fill="#fff"/>
<rect x="1263.500" y="778" width="147" height="50" rx="25" fill="none" stroke="#333" stroke-width="1.500"/>
<rect x="1267" y="781" width="140" height="44" rx="22" fill="url(#stop)"/>
<text x="1337" y="807" text-anchor="middle" style="font-size:18px;fill:#111">Stop Device</text>
</svg>
</body></html>
